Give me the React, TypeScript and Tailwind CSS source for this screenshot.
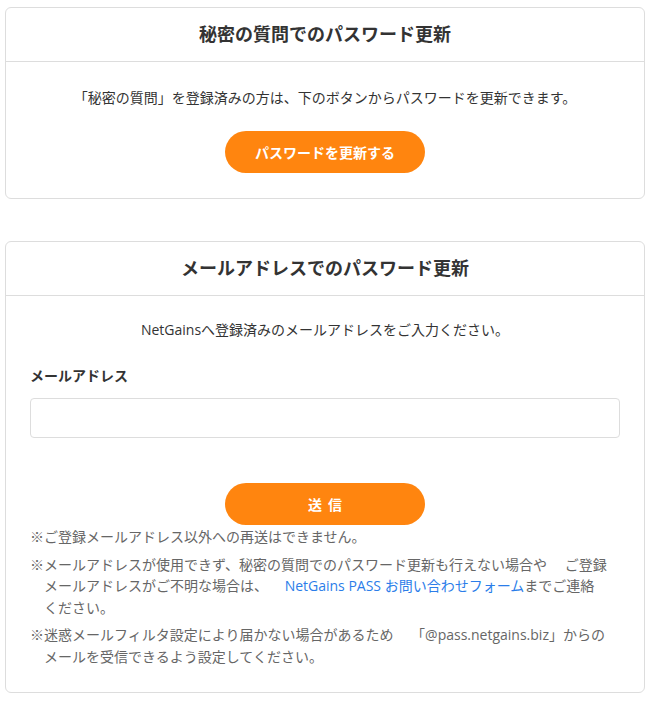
import React from 'react';

const font = { fontFamily: '"Open Sans", "Noto Sans CJK JP", sans-serif' };

const Card = ({ title, children }: { title: string; children: React.ReactNode }) => (
  <section className="w-[640px] rounded-[6px] border border-[#dddddd] bg-white">
    <header className="flex h-[54px] items-center justify-center border-b border-[#dddddd]">
      <h2 className="text-[18px] font-bold text-[#333333]">{title}</h2>
    </header>
    {children}
  </section>
);

const OrangeButton = ({ children }: { children: React.ReactNode }) => (
  <button className="mx-auto flex h-[42px] w-[200px] items-center justify-center rounded-full bg-[#ff850f] text-[14px] font-bold text-white">
    {children}
  </button>
);

export default function App() {
  return (
    <div className="min-h-screen bg-white px-[5px] pt-[7px] pb-[8px]" style={font}>
      <Card title="秘密の質問でのパスワード更新">
        <div className="px-6 pt-[25px] pb-[25px]">
          <p className="text-center text-[14px] leading-[22px] text-[#333333]">
            「秘密の質問」を登録済みの方は、下のボタンからパスワードを更新できます。
          </p>
          <div className="mt-[22px]">
            <OrangeButton>パスワードを更新する</OrangeButton>
          </div>
        </div>
      </Card>

      <div className="mt-[42px]">
        <Card title="メールアドレスでのパスワード更新">
          <div className="px-6 pt-[23px] pb-[25px]">
            <p className="text-center text-[14px] leading-[22px] text-[#333333]">
              NetGainsへ登録済みのメールアドレスをご入力ください。
            </p>
            <label className="mt-[24px] block text-[14px] font-bold leading-[22px] text-[#333333]">
              メールアドレス
            </label>
            <input
              type="email"
              className="mt-[11px] block h-[40px] w-full rounded-[4px] border border-[#dddddd] bg-white px-3 text-[14px] outline-none"
            />
            <div className="mt-[45px]">
              <OrangeButton>
                <span className="tracking-[6px] pl-[6px]">送信</span>
              </OrangeButton>
            </div>
            <div className="mt-[1px] text-[14px] leading-[21.5px] text-[#666666]">
              <p className="pl-[14px] indent-[-14px]">※ご登録メールアドレス以外への再送はできません。</p>
              <p className="mt-[6px] pl-[14px] indent-[-14px]">
                ※メールアドレスが使用できず、秘密の質問でのパスワード更新も行えない場合や{'\u3000 '}ご登録
                <br />
                メールアドレスがご不明な場合は、{'\u3000 '}
                <a className="ml-[6px] text-[#2b7de9]" href="#">NetGains PASS お問い合わせフォーム</a>
                までご連絡
                <br />
                ください。
              </p>
              <p className="mt-[6px] pl-[14px] indent-[-14px]">
                ※迷惑メールフィルタ設定により届かない場合があるため{'\u3000 '}「@pass.netgains.biz」からの
                <br />
                メールを受信できるよう設定してください。
              </p>
            </div>
          </div>
        </Card>
      </div>
    </div>
  );
}
